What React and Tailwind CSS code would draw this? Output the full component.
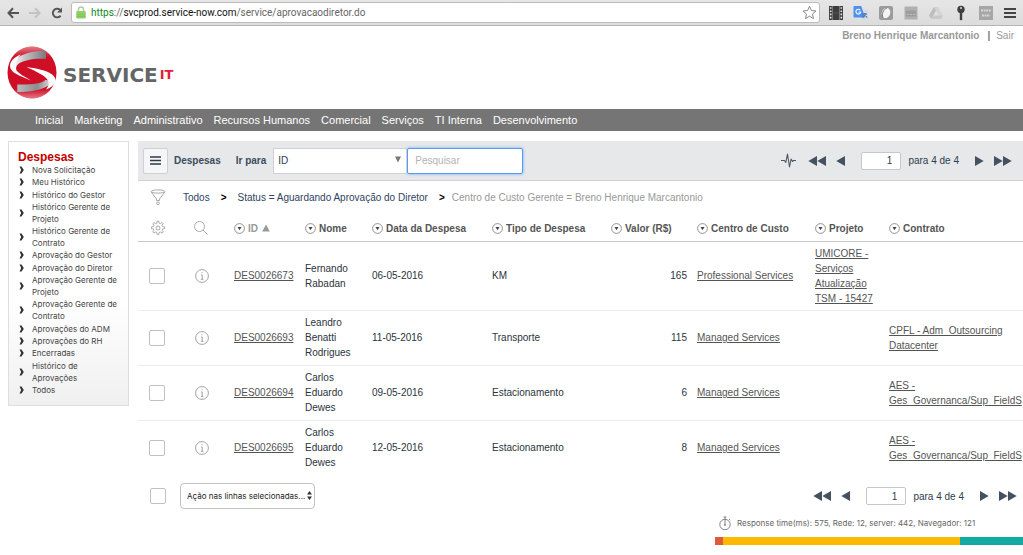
import React from 'react';

const NAV = ['Inicial', 'Marketing', 'Administrativo', 'Recursos Humanos', 'Comercial', 'Serviços', 'TI Interna', 'Desenvolvimento'];

const MENU = [
  'Nova Solicitação',
  'Meu Histórico',
  'Histórico do Gestor',
  'Histórico Gerente de Projeto',
  'Histórico Gerente de Contrato',
  'Aprovação do Gestor',
  'Aprovação do Diretor',
  'Aprovação Gerente de Projeto',
  'Aprovação Gerente de Contrato',
  'Aprovações do ADM',
  'Aprovações do RH',
  'Encerradas',
  'Histórico de Aprovações',
  'Todos',
];

const COLUMNS = ['ID', 'Nome', 'Data da Despesa', 'Tipo de Despesa', 'Valor (R$)', 'Centro de Custo', 'Projeto', 'Contrato'];

const ROWS = [
  { id: 'DES0026673', nome: 'Fernando Rabadan', data: '06-05-2016', tipo: 'KM', valor: '165', centro: 'Professional Services', projeto: 'UMICORE - Serviços Atualização TSM - 15427', contrato: '' },
  { id: 'DES0026693', nome: 'Leandro Benatti Rodrigues', data: '11-05-2016', tipo: 'Transporte', valor: '115', centro: 'Managed Services', projeto: '', contrato: 'CPFL - Adm_Outsourcing Datacenter' },
  { id: 'DES0026694', nome: 'Carlos Eduardo Dewes', data: '09-05-2016', tipo: 'Estacionamento', valor: '6', centro: 'Managed Services', projeto: '', contrato: 'AES - Ges_Governanca/Sup_FieldS' },
  { id: 'DES0026695', nome: 'Carlos Eduardo Dewes', data: '12-05-2016', tipo: 'Estacionamento', valor: '8', centro: 'Managed Services', projeto: '', contrato: 'AES - Ges_Governanca/Sup_FieldS' },
];

function BrowserBar() {
  return (
    <div className="flex h-[26px] items-center border-b border-[#b5b5b5] bg-gradient-to-b from-[#e6e6e6] to-[#dcdcdc] pl-[7px] pr-1.5">
      <button aria-label="Voltar" className="mr-2.5">
        <svg width="12" height="12" viewBox="0 0 12 12" fill="none" stroke="#555" strokeWidth="2"><path d="M12 6H1.8M6 1.3 1.5 6 6 10.7" /></svg>
      </button>
      <button aria-label="Avançar" className="mr-2.5">
        <svg width="12" height="12" viewBox="0 0 12 12" fill="none" stroke="#c3c3c3" strokeWidth="2"><path d="M0 6h10.2M6 1.3 10.5 6 6 10.7" /></svg>
      </button>
      <button aria-label="Recarregar" className="mr-2">
        <svg width="12" height="12" viewBox="0 0 12 12"><path d="M9.6 8.6A4.3 4.3 0 1 1 9 2.8" fill="none" stroke="#555" strokeWidth="1.9" /><path d="M11 .6v5H6z" fill="#555" /></svg>
      </button>
      <div className="flex h-[21px] min-w-0 flex-1 items-center rounded-[3px] border border-[#bcbcbc] bg-white pl-1 pr-0.5">
        <svg width="10" height="13" viewBox="0 0 10 13" className="mr-[5px] shrink-0"><path d="M2.4 6V3.6a2.6 2.6 0 0 1 5.2 0V6" fill="none" stroke="#b8c7a8" strokeWidth="1.5" /><rect x=".3" y="5" width="9.4" height="7.4" rx="1" fill="#8fd068" /><path d="M.5 8.7h9M.5 10.6h9" stroke="#79bd52" strokeWidth=".7" /></svg>
        <span className="flex-1 truncate font-['Roboto',sans-serif] text-[10px] leading-4 text-[#666]">
          <span className="text-[#0b8a1b]">https</span>://<span className="text-[#111]">svcprod.service-now.com</span>/service/aprovacaodiretor.do
        </span>
        <button aria-label="Favoritar">
          <svg width="15" height="15" viewBox="0 0 15 15" fill="#fff" stroke="#8a8a8a"><path d="m7.5 1.2 1.9 4.3 4.6.5-3.5 3 1 4.6-4-2.4-4 2.4 1-4.6L1 6l4.6-.5z" /></svg>
        </button>
      </div>
      <div className="ml-2 flex items-center gap-[9px]">
        <svg width="16" height="16" viewBox="0 0 16 16"><rect x="1" y="1" width="14" height="14" fill="#3e3e3e" /><path d="M4.5 1v14M11.5 1v14" stroke="#888" strokeWidth=".8" /><path d="M2.7 2.2v12M13.3 2.2v12" stroke="#e6e6e6" strokeWidth="1.6" strokeDasharray="1.6 1.6" /><path d="M5 8h6" stroke="#666" strokeWidth=".6" /></svg>
        <svg width="16" height="16" viewBox="0 0 16 16"><path d="M6 5h8a1 1 0 0 1 1 1v9H9z" fill="#d4dbe3" /><path d="M1.5 1h6.8L12 12.5H1.500a1 1 0 0 1-1-1V2a1 1 0 0 1 1-1z" fill="#4d90ee" /><path d="M7.300 5.300A2.400 2.400 0 1 0 7.700 7H5.500" fill="none" stroke="#fff" strokeWidth="1.100" /><path d="m9.500 12.500 4-4M9 9h5M11.500 8c.5 2.500 1.500 3.800 2.800 4.500" fill="none" stroke="#4f73ad" strokeWidth="1.200" /></svg>
        <svg width="16" height="16" viewBox="0 0 16 16"><rect x="1" y="1" width="14" height="14" rx="2" fill="#9b9b9b" /><ellipse cx="8" cy="8" rx="4.200" ry="5.200" fill="#f4f4f4" transform="rotate(20 8 8)" /><path d="M5 12.500C3.500 9 5 4.500 9 3" stroke="#777" fill="none" /></svg>
        <svg width="16" height="16" viewBox="0 0 16 16"><rect x="1.500" y="1.500" width="13" height="13" fill="#b0b0b0" /><rect x="3" y="5.500" width="10" height="6" fill="#9d9d9d" /><path d="M4 9.500h8" stroke="#bdbdbd" strokeDasharray="2 1" /></svg>
        <svg width="16" height="16" viewBox="0 0 16 16"><path d="M5.800 2h4.400L15 10.500h-4.400z" fill="#d4d4d4" /><path d="M5.800 2 1 10.500 3.200 14 8 5.800z" fill="#bdbdbd" /><path d="M5.300 10.500H15L12.800 14H3.200z" fill="#c9c9c9" /></svg>
        <svg width="16" height="16" viewBox="0 0 16 16"><circle cx="8" cy="4.500" r="3.700" fill="#3f3f3f" /><circle cx="8" cy="3" r="1" fill="#ddd" /><path d="M6.800 7.500h2.400v6.700L8 15.500l-1.200-1.300z" fill="#3f3f3f" /></svg>
        <svg width="16" height="16" viewBox="0 0 16 16"><rect x="1" y="1" width="14" height="14" fill="#a6a6a6" /><path d="M3 5.500h10M4 10.500h8" stroke="#d8d8d8" strokeWidth="1.800" strokeDasharray="2 .6" /></svg>
        <svg width="14" height="14" viewBox="0 0 14 14"><path d="M1 3h12M1 7h12M1 11h12" stroke="#444" strokeWidth="2.200" /></svg>
      </div>
    </div>
  );
}

function Logo() {
  return (
    <a href="#inicio" className="flex items-center gap-1.5" aria-label="Service IT">
      <svg width="50" height="53" viewBox="0 0 50 53">
        <defs>
          <linearGradient id="shine" x1="0" y1="0" x2="0" y2="1"><stop offset="0" stopColor="#fff" stopOpacity=".45" /><stop offset=".2" stopColor="#fff" stopOpacity="0" /><stop offset=".82" stopColor="#fff" stopOpacity="0" /><stop offset="1" stopColor="#fff" stopOpacity=".45" /></linearGradient>
          <linearGradient id="top" x1="0" y1="0" x2="1" y2="0"><stop offset="0" stopColor="#fff" /><stop offset=".35" stopColor="#c4c4c6" /><stop offset="1" stopColor="#77797c" /></linearGradient>
          <linearGradient id="low" x1="0" y1="0" x2="1" y2="0"><stop offset="0" stopColor="#b9babc" /><stop offset=".55" stopColor="#8b8d90" /><stop offset="1" stopColor="#e8e8e8" /></linearGradient>
        </defs>
        <ellipse cx="25" cy="26.500" rx="24.500" ry="26" fill="#cf0f25" />
        <ellipse cx="25" cy="26.500" rx="24.500" ry="26" fill="url(#shine)" />
        <path d="M39 5.300C27 4 13 8.500 8 14c-3 4-2 8 1.500 10.500C8 20 11 17.500 16 15.500c7-2.800 15-3 23-2.800z" fill="url(#top)" />
        <path d="M14 8.500C7 11 3 15.500 3 20c0 6.500 9 9.500 21 14.500-9-5.500-15.500-8.500-15.800-13.500C8 17 10 12 14 8.500z" fill="#fff" />
        <path d="M10.300 38.500c12 .5 24-.5 28-4.500l8 .5C43 42 26 46.500 10.300 46z" fill="url(#low)" />
        <path d="M19.500 21C31 22.500 48.500 26 48.500 34c0 4-4 7.500-9.500 9.500 2.500-3.500 3.500-6 2-9C38.500 29.500 28 25 19.500 21z" fill="#fff" />
      </svg>
      <span className="flex items-start gap-0.5 pt-1 font-['DejaVu_Sans',sans-serif] leading-5">
        <span className="text-[20px] font-bold text-[#646567]">SERVICE</span>
        <span className="text-[13px] font-bold leading-5 text-[#e0203a]">IT</span>
      </span>
    </a>
  );
}

function Sidebar() {
  return (
    <aside className="flex min-h-[265px] w-[121px] shrink-0 flex-col border border-[#dedede] bg-gradient-to-b from-white from-60% to-[#f0f0f1] pl-[9px] pr-2 pb-[9px] pt-2">
      <h2 className="text-[12px] font-bold leading-[14px] text-[#c40000]">Despesas</h2>
      <ul className="flex flex-1 flex-col justify-between">
        {MENU.map((m) => (
          <li key={m} className="flex items-center">
            <svg width="5" height="8" viewBox="0 0 5 8" className="ml-px mr-2 shrink-0"><path d="M.5.5h2L4.800 4 2.500 7.500h-2L2.200 4z" fill="#333" /></svg>
            <a href="#menu" className="font-['Inter',sans-serif] text-[8px] leading-3 text-[#444]">{m}</a>
          </li>
        ))}
      </ul>
    </aside>
  );
}

function Arrows({ back, double, label }) {
  const w = double ? 18 : 9;
  return (
    <button aria-label={label}>
      <svg width={w} height="10" viewBox={double ? '0 0 18 10' : '0 0 9 10'} fill="#435160">
        {back ? <path d="M9 0v10L.3 5z" /> : <path d="M0 0v10L8.700 5z" />}
        {double && (back ? <path d="M18 0v10L9.300 5z" /> : <path d="M9 0v10L17.700 5z" />)}
      </svg>
    </button>
  );
}

function Pager({ name }) {
  return (
    <div className="flex items-center text-[#2e3d4d]">
      <div className="flex gap-2.5"><Arrows back double label="Primeira página" /><Arrows back label="Página anterior" /></div>
      <input aria-label="Página" name={name} defaultValue="1" className="ml-4 h-[18px] w-10 rounded-[2px] border border-[#c4c8cc] bg-white px-2 text-right text-[10px]" />
      <span className="ml-[7px] mr-4 leading-[15px]">para 4 de 4</span>
      <div className="flex gap-2.5"><Arrows label="Próxima página" /><Arrows double label="Última página" /></div>
    </div>
  );
}

function Toolbar() {
  return (
    <div className="flex h-10 items-center border-b border-[#cfd1d4] bg-[#e6e8ea] pl-[5px] pr-[11px]">
      <button aria-label="Menu da lista" className="flex h-[26px] w-[25px] items-center justify-center rounded-[2px] border border-[#cdd0d4] bg-[#f5f6f7]">
        <svg width="11" height="9" viewBox="0 0 11 9"><path d="M0 1h11M0 4.500h11M0 8h11" stroke="#2e3a46" strokeWidth="1.500" /></svg>
      </button>
      <span className="ml-1.5 font-bold text-[#3d4c5c]">Despesas</span>
      <label htmlFor="campo" className="ml-[15px] mr-[7px] font-bold text-[#3d4c5c]">Ir para</label>
      <div className="relative">
        <select id="campo" className="block h-[26px] w-[134px] appearance-none border border-[#cdd0d4] bg-white px-1 text-[10px] text-[#2e3d4d]">
          <option>ID</option>
          <option>Nome</option>
        </select>
        <svg width="6" height="7" viewBox="0 0 6 7" className="pointer-events-none absolute right-1.5 top-2"><path d="M0 .5h6L3 6.500z" fill="#777" /></svg>
      </div>
      <input aria-label="Pesquisar" placeholder="Pesquisar" className="h-[26px] w-[116px] rounded-[2px] border border-[#5a9cf5] bg-white px-[7px] text-[10px] shadow-[0_0_3px_#66a6ff] outline-none placeholder:text-[#b3b3b3]" />
      <div className="ml-auto flex items-center gap-3">
        <svg width="15" height="15" viewBox="0 0 15 15" fill="none" stroke="#4c5966" strokeWidth="1.100" strokeLinejoin="round"><path d="M0 7.500h3.500l1.300 2L6.500 1l2 13 1.600-8 1.400 2.500 1-1H15" /></svg>
        <Pager name="pagina-topo" />
      </div>
    </div>
  );
}

function Filter() {
  return (
    <div className="flex h-8 items-center pl-3 leading-[15px] text-[#2f4260]">
      <button aria-label="Filtro" className="mr-[17px]">
        <svg width="16" height="17" viewBox="0 0 16 17" fill="none" stroke="#aaa"><ellipse cx="8" cy="2.500" rx="6.800" ry="1.600" /><path d="M1.200 3 6.500 10v1.500h3V10l5.300-7" /><circle cx="8" cy="14.300" r="1.400" /></svg>
      </button>
      <nav className="flex items-center gap-[11px]" aria-label="Filtros aplicados">
        <a href="#todos">Todos</a>
        <span className="font-bold text-black">&gt;</span>
        <a href="#status">Status = Aguardando Aprovação do Diretor</a>
        <span className="font-bold text-black">&gt;</span>
        <a href="#centro" className="-ml-1 text-[#999]">Centro de Custo Gerente = Breno Henrique Marcantonio</a>
      </nav>
    </div>
  );
}

function Check({ label }) {
  return <input type="checkbox" aria-label={label} className="block h-4 w-4 appearance-none rounded-[2px] border border-[#c0c0c0] bg-white" />;
}

function Expenses() {
  const link = 'text-[#545454] underline underline-offset-1';
  return (
    <table className="w-full table-fixed border-collapse leading-[15px] text-[#2b333c]">
      <colgroup>
        <col className="w-[48px]" /><col className="w-[43px]" /><col className="w-[71px]" /><col className="w-[67px]" /><col className="w-[120px]" />
        <col className="w-[119px]" /><col className="w-[86px]" /><col className="w-[118px]" /><col className="w-[74px]" /><col />
      </colgroup>
      <thead>
        <tr className="h-7 border-b border-[#c6c6c6] text-left text-[#555]">
          <th className="pl-3 pt-[3px]">
            <button aria-label="Personalizar lista" className="block">
              <svg width="16" height="16" viewBox="0 0 16 16" fill="none" stroke="#aaa"><circle cx="8" cy="8" r="2" /><path d="M6.900 3.100 7.200 1.200h1.600l.3 1.900 1.300.5 1.600-1.100 1.200 1.200-1.100 1.600.5 1.300 1.900.3v1.800l-1.900.3-.5 1.300 1.100 1.600-1.200 1.200-1.600-1.100-1.300.5-.3 1.900H7.200l-.3-1.900-1.300-.5L4 13.100 2.800 11.900l1.100-1.600L3.400 9 1.500 8.700V6.900l1.900-.3.500-1.300-1.100-1.600L4 2.500l1.600 1.100z" /></svg>
            </button>
          </th>
          <th className="pl-2 pt-[3px]">
            <button aria-label="Pesquisar na lista" className="block">
              <svg width="14" height="14" viewBox="0 0 14 14" fill="none" stroke="#aaa"><circle cx="5.500" cy="5.500" r="5" /><path d="m9 9 4.600 4.600" /></svg>
            </button>
          </th>
          {COLUMNS.map((c) => (
            <th key={c} className={c === 'ID' ? 'px-[5px] pt-[3px] text-[#999]' : 'px-[5px] pt-[3px]'}>
              <button className="flex items-center gap-[3px] whitespace-nowrap font-bold">
                <svg width="11" height="11" viewBox="0 0 11 11"><circle cx="5.500" cy="5.500" r="4.900" fill="#fff" stroke="#777" strokeWidth=".8" /><path d="M3.500 4h4l-2 3.300z" fill="#444" /></svg>
                {c}
                {c === 'ID' && <svg width="8" height="8" viewBox="0 0 8 8" className="ml-px"><path d="M4 .5 7.800 7.500H.2z" fill="#999" /></svg>}
              </button>
            </th>
          ))}
        </tr>
      </thead>
      <tbody>
        {ROWS.map((r, i) => (
          <tr key={r.id} className={i === 3 ? 'h-[55px]' : i === 0 ? 'h-[69px] border-b border-[#ececec]' : 'h-[55px] border-b border-[#ececec]'}>
            <td className="pl-[11px]"><Check label={'Selecionar ' + r.id} /></td>
            <td className="pl-[9px]">
              <button aria-label={'Detalhes de ' + r.id} className="block">
                <svg width="14" height="14" viewBox="0 0 14 14" fill="none" stroke="#999" strokeWidth=".9"><circle cx="7" cy="7" r="6.400" /><path d="M6 6h1.200v4.300M5.800 10.300h2.600M6.500 3.700h1" /></svg>
              </button>
            </td>
            <td className="px-[5px]"><a href="#registro" className={link}>{r.id}</a></td>
            <td className="px-[5px]">{r.nome}</td>
            <td className="px-[5px]">{r.data}</td>
            <td className="px-[5px]">{r.tipo}</td>
            <td className="px-[5px] text-right">{r.valor}</td>
            <td className="px-[5px]"><a href="#centro" className={link}>{r.centro}</a></td>
            <td className="pl-[5px]">{r.projeto && <a href="#projeto" className={link}>{r.projeto}</a>}</td>
            <td className="overflow-hidden pl-[5px]">{r.contrato && <a href="#contrato" className={link}>{r.contrato}</a>}</td>
          </tr>
        ))}
      </tbody>
    </table>
  );
}

function ListFooter() {
  return (
    <div className="flex items-center pb-[7px] pl-3 pr-1.5 pt-2">
      <Check label="Selecionar todos" />
      <div className="relative ml-[14px]">
        <select aria-label="Ação nas linhas selecionadas" className="block h-[26px] w-[135px] appearance-none rounded border border-[#c0c2c4] bg-white px-1.5 font-['Inter',sans-serif] text-[8px] text-[#222]">
          <option>Ação nas linhas selecionadas...</option>
        </select>
        <svg width="5" height="9" viewBox="0 0 5 9" className="pointer-events-none absolute right-[3px] top-2" fill="#333"><path d="M2.500 0 5 3.500H0zM2.500 9 5 5.500H0z" /></svg>
      </div>
      <div className="ml-auto"><Pager name="pagina-rodape" /></div>
    </div>
  );
}

function Timing() {
  return (
    <div className="ml-auto w-[308px]">
      <p className="flex items-center gap-1.5 pl-1 font-['Inter',sans-serif] text-[8px] leading-[15px] text-[#666]">
        <svg width="12" height="15" viewBox="0 0 12 15" fill="none" stroke="#777" strokeWidth=".9"><circle cx="6" cy="8.500" r="5.200" /><path d="M6 1v7.500M4.500 1h3M10 3l1.300 1.200" /><circle cx="6" cy="9" r=".6" /></svg>
        Response time(ms): 575, Rede: 12, server: 442, Navegador: 121
      </p>
      <div className="mt-1.5 flex h-2">
        <span className="w-2 bg-[#de5a3c]" />
        <span className="w-[237px] bg-[#fcb900]" />
        <span className="flex-1 bg-[#12aaa4]" />
      </div>
    </div>
  );
}

export default function App() {
  return (
    <div className="min-h-screen overflow-x-hidden bg-white font-['Liberation_Sans',Arial,sans-serif] text-[10px]">
      <BrowserBar />
      <header className="flex h-[83px] justify-between pl-[7px] pr-[9px]">
        <div className="pt-5"><Logo /></div>
        <div className="flex gap-2 pt-0.5 leading-[15px] text-[#999]">
          <span className="font-bold">Breno Henrique Marcantonio</span>
          <span className="flex gap-1.5"><span className="font-bold text-[#777]">|</span><a href="#sair">Sair</a></span>
        </div>
      </header>
      <nav className="flex h-[22px] items-center gap-[11px] bg-[#757575] pl-[35px] text-[11px] text-white" aria-label="Principal">
        {NAV.map((n) => <a key={n} href="#nav">{n}</a>)}
      </nav>
      <div className="flex items-start gap-[9px] pl-2 pt-2.5">
        <Sidebar />
        <main className="min-w-0 flex-1">
          <Toolbar />
          <Filter />
          <Expenses />
          <ListFooter />
          <Timing />
        </main>
      </div>
    </div>
  );
}
